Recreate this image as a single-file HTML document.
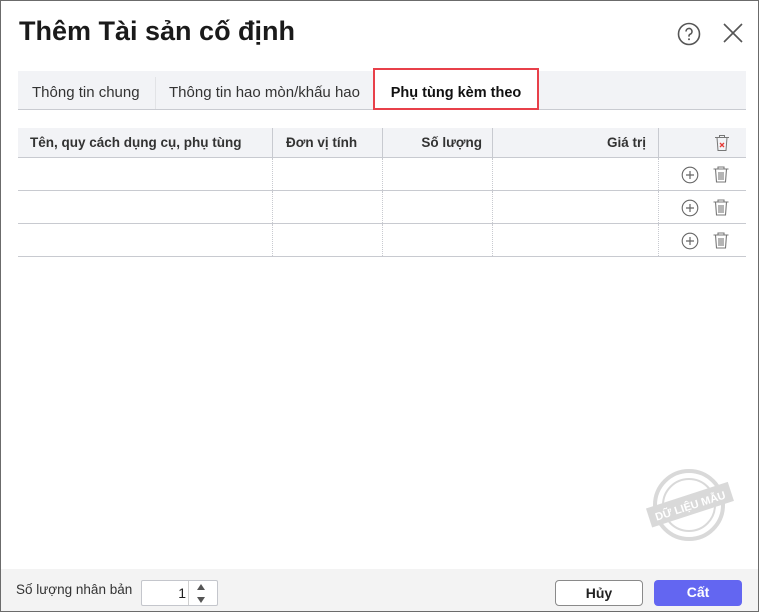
<!DOCTYPE html>
<html><head><meta charset="utf-8"><style>
*{box-sizing:border-box;margin:0;padding:0}
body{width:759px;height:612px;overflow:hidden;background:#fff;font-family:"Liberation Sans",sans-serif;color:#212121;position:relative}
.frame{position:absolute;left:0;top:0;width:759px;height:612px;border:1px solid #6b6b6b}
.title{position:absolute;left:19px;top:16px;font-size:27px;font-weight:bold;color:#1a1a1a}
.tabs{position:absolute;left:18px;top:71px;width:728px;height:39px;background:#f2f3f6;border-bottom:1px solid #c9cbd1}
.tab{position:absolute;top:0;height:38px;line-height:43px;font-size:15px;color:#333}
.sel{position:absolute;left:373px;top:68px;width:166px;height:42px;border:2px solid #e8404a;background:#fff;font-weight:bold;font-size:14.5px;line-height:46px;text-align:center;color:#111}
.row{position:absolute;left:18px;width:728px;border-bottom:1px solid #c8cad0}
.hd{top:128px;height:30px;background:#f2f3f6;font-weight:bold;font-size:13.5px;color:#333}
.c{position:absolute;top:0;height:100%}
.footer{position:absolute;left:1px;top:569px;width:757px;height:42px;background:#f3f3f3}
.btn{position:absolute;top:580px;height:26px;border-radius:4px;font-weight:bold;font-size:14px;text-align:center;line-height:25px}
</style></head><body>
<div class="title">Thêm Tài sản cố định</div>
<svg style="position:absolute;left:677px;top:22px" width="24" height="24" viewBox="0 0 24 24"><circle cx="12" cy="12" r="10.5" fill="none" stroke="#555" stroke-width="1.6"/><path d="M9 9.5a3 3 0 1 1 4 2.8c-.8.4-1 .9-1 1.7v.6" fill="none" stroke="#555" stroke-width="1.6"/><circle cx="12" cy="17.3" r="1" fill="#555"/></svg>
<svg style="position:absolute;left:722px;top:22px" width="22" height="22" viewBox="0 0 22 22"><path d="M2 2L20 20M20 2L2 20" stroke="#555" stroke-width="1.6"/></svg>
<div class="tabs">
<div class="tab" style="left:14px">Thông tin chung</div>
<div style="position:absolute;left:137px;top:6px;width:1px;height:32px;background:#e2e3e6"></div>
<div class="tab" style="left:151px">Thông tin hao mòn/khấu hao</div>
</div>
<div class="sel">Phụ tùng kèm theo</div>
<div class="row hd">
<div class="c" style="left:12px;line-height:29px">Tên, quy cách dụng cụ, phụ tùng</div>
<div class="c" style="left:254px;border-left:1px solid #c8cad0;width:110px;padding-left:13px;line-height:29px">Đơn vị tính</div>
<div class="c" style="left:364px;border-left:1px solid #c8cad0;width:110px;text-align:right;padding-right:10px;line-height:29px">Số lượng</div>
<div class="c" style="left:474px;border-left:1px solid #c8cad0;width:166px;text-align:right;padding-right:12px;line-height:29px">Giá trị</div>
<div class="c" style="left:640px;border-left:1px solid #c8cad0;width:88px">
<svg style="position:absolute;left:55px;top:6px" width="16" height="18" viewBox="0 0 16 18"><path d="M1 3.5h14M5.5 3.5V1.5h5v2M3 3.5l1 13h8l1-13" fill="none" stroke="#777" stroke-width="1"/><path d="M6 9l4 4M10 9l-4 4" stroke="#e53935" stroke-width="1.3"/></svg></div>
</div>
<div id="rows"></div>
<script>
var h='';for(var i=0;i<3;i++){var t=158+i*33;h+='<div class="row" style="top:'+t+'px;height:33px">'+
'<div class="c" style="left:254px;border-left:1px dotted #c8cad0"></div><div class="c" style="left:364px;border-left:1px dotted #c8cad0"></div><div class="c" style="left:474px;border-left:1px dotted #c8cad0"></div><div class="c" style="left:640px;border-left:1px dotted #c8cad0"></div>'+
'<svg style="position:absolute;left:663px;top:8px" width="18" height="18" viewBox="0 0 18 18"><circle cx="9" cy="9" r="7.8" fill="none" stroke="#666" stroke-width="1.1"/><path d="M9 5v8M5 9h8" stroke="#666" stroke-width="1.2"/></svg>'+
'<svg style="position:absolute;left:694px;top:7px" width="18" height="19" viewBox="0 0 18 19"><path d="M1.5 4h15M6 4V2h6v2M3.5 4l1 13h9l1-13M7 7v8M9 7v8M11 7v8" fill="none" stroke="#777" stroke-width="1.1"/></svg></div>';}
document.getElementById('rows').innerHTML=h;
</script>
<svg style="position:absolute;left:645px;top:465px" width="92" height="80" viewBox="0 0 92 80"><g opacity="0.55"><circle cx="44" cy="40" r="34" fill="none" stroke="#bbb" stroke-width="4"/><circle cx="44" cy="40" r="26" fill="none" stroke="#bbb" stroke-width="2"/><g transform="rotate(-18 44 40)"><rect x="2" y="30" width="86" height="20" fill="#bbb"/><text x="45" y="45" font-size="11" font-weight="bold" fill="#fff" text-anchor="middle" font-family="Liberation Sans">DỮ LIỆU MẪU</text></g></g></svg>
<div class="footer"></div>
<div style="position:absolute;left:16px;top:582px;font-size:13.5px;color:#333">Số lượng nhân bản</div>
<div style="position:absolute;left:141px;top:580px;width:77px;height:26px;border:1px solid #c4c6cc;background:#fff;border-radius:2px">
<div style="position:absolute;left:0;width:44px;text-align:right;top:4px;font-size:14px">1</div>
<div style="position:absolute;left:46px;top:0;width:1px;height:24px;background:#d0d0d0"></div>
<div style="position:absolute;left:55px;top:3px;width:0;height:0;border:4px solid transparent;border-bottom:6px solid #555;border-top:0"></div>
<div style="position:absolute;left:55px;top:16px;width:0;height:0;border:4px solid transparent;border-top:6px solid #555;border-bottom:0"></div>
</div>
<div class="btn" style="left:555px;width:88px;border:1px solid #8a8a8a;background:#fff;color:#222">Hủy</div>
<div class="btn" style="left:654px;width:88px;background:#6366f1;color:#fff">Cất</div>
<div class="frame"></div>
</body></html>
